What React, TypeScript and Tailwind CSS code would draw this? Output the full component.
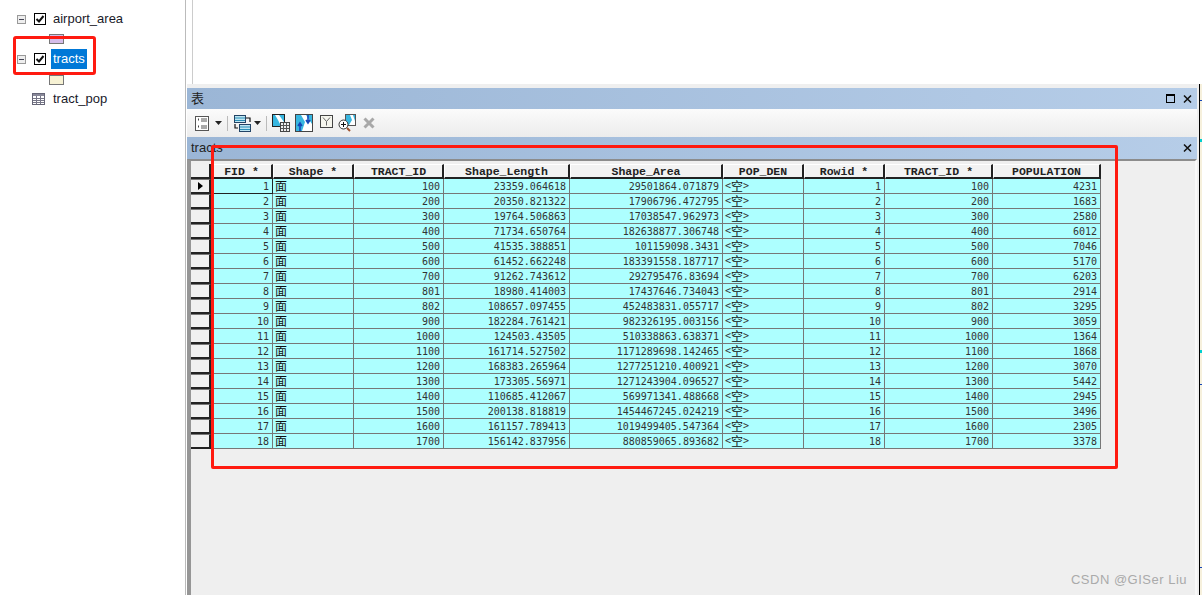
import type { ReactNode } from "react";

const rows = [
  ["1", "100", "23359.064618", "29501864.071879", "4231"],
  ["2", "200", "20350.821322", "17906796.472795", "1683"],
  ["3", "300", "19764.506863", "17038547.962973", "2580"],
  ["4", "400", "71734.650764", "182638877.306748", "6012"],
  ["5", "500", "41535.388851", "101159098.3431", "7046"],
  ["6", "600", "61452.662248", "183391558.187717", "5170"],
  ["7", "700", "91262.743612", "292795476.83694", "6203"],
  ["8", "801", "18980.414003", "17437646.734043", "2914"],
  ["9", "802", "108657.097455", "452483831.055717", "3295"],
  ["10", "900", "182284.761421", "982326195.003156", "3059"],
  ["11", "1000", "124503.43505", "510338863.638371", "1364"],
  ["12", "1100", "161714.527502", "1171289698.142465", "1868"],
  ["13", "1200", "168383.265964", "1277251210.400921", "3070"],
  ["14", "1300", "173305.56971", "1271243904.096527", "5442"],
  ["15", "1400", "110685.412067", "569971341.488668", "2945"],
  ["16", "1500", "200138.818819", "1454467245.024219", "3496"],
  ["17", "1600", "161157.789413", "1019499405.547364", "2305"],
  ["18", "1700", "156142.837956", "880859065.893682", "3378"],
];

function Head({ w, label, star }: { w: string; label: string; star?: boolean }) {
  return (
    <div className={`${w} h-[15px] shrink-0 flex items-center justify-center gap-[7px] pt-[1px] leading-none bg-[#f2f2f2] border-t border-l border-t-white border-l-white border-r-2 border-b-2 border-r-[#222] border-b-[#222] text-[11.5px] font-bold text-[#222] font-['Liberation_Mono',monospace]`}>
      {label}
      {star && <span>*</span>}
    </div>
  );
}

function Cell({ w, children, left, focus }: { w: string; children: ReactNode; left?: boolean; focus?: boolean }) {
  return (
    <div className={`${w} h-[15px] shrink-0 border-r border-b ${focus ? "border-[#222]" : "border-[#777]"} bg-[#adffff] text-[10px] text-[#333] whitespace-nowrap font-['DejaVu_Sans_Mono',monospace] ${left ? "flex items-center pl-[2px] leading-none" : "text-right pr-[3px] leading-[15px]"}`}>
      {children}
    </div>
  );
}

function Cjk({ children }: { children: string }) {
  return <span className="text-[12px] leading-none text-[#111] font-['Noto_Sans_CJK_SC',sans-serif]">{children}</span>;
}

function Minus() {
  return (
    <span className="w-[9px] h-[9px] shrink-0 border border-[#999] bg-[#eeeeee] flex items-center justify-center">
      <span className="w-[5px] h-px bg-[#445]" />
    </span>
  );
}

function Check() {
  return (
    <span className="ml-[8px] w-[12px] h-[12px] shrink-0 border border-black bg-white flex items-center justify-center">
      <svg width="10" height="10" viewBox="0 0 10 10"><path d="M1.5 5l2.5 2.5 4.5-5.5" fill="none" stroke="#111" strokeWidth="2" /></svg>
    </span>
  );
}

function Caret() {
  return <svg width="7" height="4" viewBox="0 0 7 4"><path d="M0 0h7L3.5 4z" fill="#222" /></svg>;
}

function CloseX({ className }: { className?: string }) {
  return (
    <svg className={className} width="9" height="8" viewBox="0 0 9 8">
      <path d="M1 0.5l7 7M8 0.5l-7 7" stroke="#111" strokeWidth="1.5" />
    </svg>
  );
}

export default function App() {
  return (
    <div className="w-[1202px] h-[595px] overflow-hidden bg-white flex font-['Liberation_Sans','Noto_Sans_CJK_SC',sans-serif] relative">
      {/* layer tree */}
      <div className="w-[186px] h-full shrink-0 border-r border-[#bbb] pt-[9px] text-[13px] text-[#1a1a2a]">
        <div className="flex items-center h-[20px] pl-[17px]">
          <Minus />
          <Check />
          <span className="ml-[7px]">airport_area</span>
        </div>
        <div className="ml-[49px] mt-[5px] w-[15px] h-[10px] bg-[#d5bdea] border border-[#777]" />
        <div className="flex items-center h-[20px] pl-[17px] mt-[5px]">
          <Minus />
          <Check />
          <span className="ml-[5px] px-[2px] h-[20px] w-[36px] leading-[20px] bg-[#0078d7] text-white">tracts</span>
        </div>
        <div className="ml-[49px] mt-[6px] w-[15px] h-[10px] bg-[#f7f2d4] border border-[#777]" />
        <div className="flex items-center h-[20px] pl-[32px] mt-[4px]">
          <svg width="13" height="12" viewBox="0 0 13 12">
            <rect x="0.5" y="0.5" width="12" height="11" fill="#fff" stroke="#667" />
            <rect x="1" y="1" width="11" height="2" fill="#889" />
            <path d="M1 5.5h11M1 7.5h11M1 9.5h11M4.5 3v8M8.5 3v8" stroke="#778" />
          </svg>
          <span className="ml-[8px]">tract_pop</span>
        </div>
      </div>

      <div className="flex-1 min-w-0 flex flex-col pl-px">
        <div className="h-[84px] shrink-0 ml-[5px] border-l border-[#ccc] bg-white" />
        <div className="flex-1 min-h-0 flex">
          {/* table window */}
          <div className="flex-1 min-w-0 bg-[#efefef] flex flex-col pt-[4px] pr-[2px]">
            <div className="h-[21px] shrink-0 flex items-center justify-between pl-[4px] pr-[5px] bg-gradient-to-r from-[#9bb6d6] to-[#b6cde8] text-[13px] text-[#222]">
              <span>表</span>
              <div className="flex items-center gap-[8px]">
                <span className="w-[9px] h-[9px] border border-black border-t-2" />
                <CloseX />
              </div>
            </div>
            <div className="h-[28px] shrink-0 flex items-center pl-[8px] bg-gradient-to-b from-[#fbfbfb] to-[#ececec]">
              <svg width="14" height="15" viewBox="0 0 14 15">
                <rect x="0.5" y="0.5" width="13" height="14" fill="#fff" stroke="#555" />
                <path d="M3 3.5h1M3 10.5h1" stroke="#444" strokeWidth="2" />
                <path d="M6 3h6M6 5h6M6 10h6M6 12h6" stroke="#555" />
              </svg>
              <span className="ml-[6px]"><Caret /></span>
              <span className="ml-[5px] w-px h-[15px] bg-[#bbbbbb]" />
              <svg className="ml-[6px]" width="17" height="17" viewBox="0 0 17 17">
                <rect x="0.5" y="0.5" width="11" height="7" fill="#bfe6f2" stroke="#246" />
                <path d="M1 3h10M1 5.5h10" stroke="#2a8fb8" />
                <rect x="5.5" y="9.5" width="11" height="7" fill="#bfe6f2" stroke="#246" />
                <path d="M6 12h10M6 14.5h10" stroke="#2a8fb8" />
                <path d="M12 3h4v4M1 9v4h3" fill="none" stroke="#111" strokeWidth="1.2" />
              </svg>
              <span className="ml-[3px]"><Caret /></span>
              <span className="ml-[5px] w-px h-[15px] bg-[#bbbbbb]" />
              <svg className="ml-[5px]" width="18" height="18" viewBox="0 0 18 18">
                <rect x="0.5" y="0.5" width="12" height="12" fill="#37b6e0" stroke="#222" />
                <path d="M3 1h4l5 7v4H9L6 6z" fill="#fff" />
                <rect x="8.5" y="8.5" width="9" height="9" fill="#eee" stroke="#444" />
                <path d="M9 11.5h8M9 14.5h8M11.5 9v8M14.5 9v8" stroke="#555" />
              </svg>
              <svg className="ml-[5px]" width="18" height="18" viewBox="0 0 18 18">
                <rect x="0.5" y="0.5" width="17" height="17" fill="#fff" stroke="#444" />
                <path d="M1 1h5l4 7-3 9H1zM11 1h6v9z" fill="#37b6e0" />
                <path d="M5 17v-7M3 12l2-3 2 3M13 1v7M11 6l2 3 2-3" fill="none" stroke="#1546b8" strokeWidth="1.6" />
              </svg>
              <svg className="ml-[7px] -mt-[3px]" width="13" height="13" viewBox="0 0 13 13">
                <rect x="0.5" y="0.5" width="12" height="12" fill="#f6f6ee" stroke="#444" />
                <path d="M3 2.5l3.5 4 3.5-4M6.5 6.5v4" fill="none" stroke="#666" />
              </svg>
              <svg className="ml-[5px]" width="18" height="18" viewBox="0 0 18 18">
                <rect x="7.5" y="0.5" width="10" height="11" fill="#fff" stroke="#555" />
                <path d="M8 1h4l2 5-3 5H8zM15 1h2v6z" fill="#37b6e0" />
                <circle cx="5.5" cy="10.5" r="4.5" fill="#fff" stroke="#333" />
                <path d="M3 10.5h5M5.5 8v5" stroke="#111" />
                <path d="M9 14l3 3" stroke="#a0522d" strokeWidth="2" />
              </svg>
              <svg className="ml-[7px]" width="12" height="12" viewBox="0 0 12 12">
                <path d="M1.5 1.5l9 9M10.5 1.5l-9 9" stroke="#a8a8a8" strokeWidth="3" />
              </svg>
            </div>
            <div className="h-[22px] shrink-0 flex items-center justify-between pl-[4px] pr-[5px] bg-gradient-to-r from-[#9bb6d6] to-[#b6cde8] text-[13px] text-[#222]">
              <span>tracts</span>
              <CloseX />
            </div>
            <div className="flex-1 min-h-0 border-t-2 border-t-[#8c8c8c] border-l-[4px] border-l-[#969696] border-r-2 border-r-[#f8f8f8] pt-[3px]">
              <div className="flex">
                <div className="w-[20px] h-[15px] shrink-0 bg-[#f0f0f0] border-r-2 border-b-2 border-[#222]" />
                <Head w="w-[62px]" label="FID" star />
                <Head w="w-[81px]" label="Shape" star />
                <Head w="w-[90px]" label="TRACT_ID" />
                <Head w="w-[126px]" label="Shape_Length" />
                <Head w="w-[153px]" label="Shape_Area" />
                <Head w="w-[81px]" label="POP_DEN" />
                <Head w="w-[81px]" label="Rowid" star />
                <Head w="w-[108px]" label="TRACT_ID" star />
                <Head w="w-[108px]" label="POPULATION" />
              </div>
              {rows.map((r, i) => (
                <div key={r[0]} className="flex">
                  <div className="w-[20px] h-[15px] shrink-0 bg-[#f0f0f0] border-t border-t-[#777] border-r-2 border-b-2 border-r-[#222] border-b-[#222] flex items-center justify-center">
                    {i === 0 && <span className="w-0 h-0 border-y-[4px] border-y-transparent border-l-[5px] border-l-black" />}
                  </div>
                  <Cell w="w-[62px]" focus={i === 0}>{r[0]}</Cell>
                  <Cell w="w-[81px]" left><Cjk>面</Cjk></Cell>
                  <Cell w="w-[90px]">{r[1]}</Cell>
                  <Cell w="w-[126px]">{r[2]}</Cell>
                  <Cell w="w-[153px]">{r[3]}</Cell>
                  <Cell w="w-[81px]" left>&lt;<Cjk>空</Cjk>&gt;</Cell>
                  <Cell w="w-[81px]">{r[0]}</Cell>
                  <Cell w="w-[108px]">{r[1]}</Cell>
                  <Cell w="w-[108px]">{r[4]}</Cell>
                </div>
              ))}
            </div>
          </div>
          {/* edge of the window behind */}
          <div className="w-[3px] shrink-0 relative border-l border-black bg-[#f6f0dc]">
            <span className="absolute left-0 top-[16px] w-[2px] h-px bg-[#1546b8]" />
            <span className="absolute left-0 top-[55px] w-[2px] h-[3px] bg-[#00d0d0]" />
            <span className="absolute left-0 top-[266px] w-[2px] h-[3px] bg-[#00d0d0]" />
            <span className="absolute left-0 top-[300px] w-[2px] h-px bg-[#1546b8]" />
            <span className="absolute left-0 top-[483px] w-[2px] h-px bg-[#1546b8]" />
          </div>
        </div>
      </div>

      {/* annotation boxes drawn over the screenshot */}
      <div className="absolute left-[13px] top-[36px] w-[83px] h-[39px] border-[3px] border-[#ff1a10] rounded-[3px]" />
      <div className="absolute left-[211px] top-[145px] w-[907px] h-[324px] border-[3px] border-[#ff1a10] rounded-[2px]" />
      <div className="absolute right-[15px] bottom-[6px] text-[13px] text-[#aaaaaa] tracking-[0.5px]">CSDN @GISer Liu</div>
    </div>
  );
}
